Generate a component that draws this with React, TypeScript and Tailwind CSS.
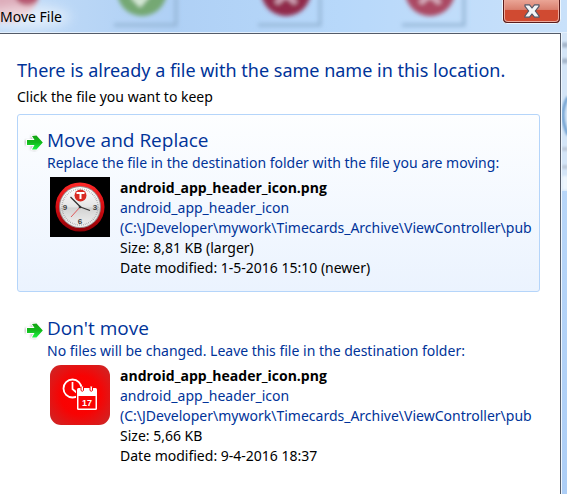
import React from 'react';

interface FileOption {
  id: string;
  title: string;
  description: string;
  name: string;
  folder: string;
  path: string;
  size: string;
  modified: string;
  highlighted: boolean;
  thumbnail: React.ReactNode;
}

const ClockThumbnail = () => (
  <svg viewBox="0 0 60 60" className="block h-[60px] w-[60px] shrink-0" aria-hidden="true">
    <defs>
      <linearGradient id="rim" x1="0" y1="0" x2="0" y2="1">
        <stop offset="0" stopColor="#ff2a2a" />
        <stop offset="0.5" stopColor="#d50d12" />
        <stop offset="1" stopColor="#8f0006" />
      </linearGradient>
      <linearGradient id="face" x1="0" y1="0" x2="0" y2="1">
        <stop offset="0" stopColor="#ffffff" />
        <stop offset="0.5" stopColor="#e4e4e4" />
        <stop offset="0.52" stopColor="#d2d2d2" />
        <stop offset="1" stopColor="#f2f2f2" />
      </linearGradient>
    </defs>
    <rect width="60" height="60" fill="#000" />
    <circle cx="30" cy="30" r="24.5" fill="url(#rim)" />
    <circle cx="30" cy="30" r="21" fill="#9a8f8f" />
    <circle cx="30" cy="30" r="20" fill="url(#face)" />
    <circle cx="30" cy="30" r="18" fill="none" stroke="#888" strokeWidth="1.5" strokeDasharray="0.5 1.385" />
    <circle cx="30.500" cy="18.500" r="6" fill="#d92a22" />
    <path d="M26.500 16h8M30.500 16v6" stroke="#fff" strokeWidth="2" fill="none" />
    <g fontFamily="'Liberation Sans', sans-serif" fontSize="8" fontWeight="bold" fill="#444" textAnchor="middle">
      <text x="15" y="33">9</text>
      <text x="45" y="33">3</text>
      <text x="30" y="47">6</text>
    </g>
    <path d="M31 30.500L20.500 20M29 29.500L40 33.500" stroke="#333" strokeWidth="1.300" fill="none" />
    <path d="M31 29L21 40" stroke="#e0484a" strokeWidth="0.900" fill="none" />
    <circle cx="30" cy="30" r="1.300" fill="#333" />
  </svg>
);

const CalendarThumbnail = () => (
  <svg viewBox="0 0 60 60" className="block h-[60px] w-[60px] shrink-0" aria-hidden="true">
    <defs>
      <radialGradient id="redTile" cx="0.5" cy="0.5" r="0.65">
        <stop offset="0" stopColor="#ff0000" />
        <stop offset="0.5" stopColor="#f80303" />
        <stop offset="1" stopColor="#cf2424" />
      </radialGradient>
    </defs>
    <rect width="60" height="60" rx="11" fill="url(#redTile)" />
    <circle cx="22.500" cy="23.500" r="9" fill="none" stroke="#fff" strokeWidth="1.800" />
    <path d="M22.500 17v7l4 3.500" fill="none" stroke="#fff" strokeWidth="1.700" />
    <path d="M26 22.500h22v23H26z" fill="#f80303" />
    <path d="M27 24.500q0-1.500 1.500-1.500h17q1.500 0 1.500 1.500v19q0 1.500-1.500 1.500h-17q-1.500 0-1.500-1.500z" fill="#fff" />
    <path d="M28.500 31h17v12.500h-17z" fill="#f80303" />
    <path d="M31 21.500v4q1.300 1.500 2.500 0v-4M40 21.500v4q1.300 1.500 2.500 0v-4" fill="#fff" stroke="#f80303" strokeWidth="1" />
    <text x="37" y="40.500" textAnchor="middle" fontFamily="'Liberation Sans', sans-serif" fontSize="9" fontWeight="bold" fill="#fff">17</text>
  </svg>
);

const ArrowIcon = () => (
  <svg viewBox="0 0 20 20" className="mt-[6px] h-5 w-5 shrink-0" aria-hidden="true">
    <defs>
      <linearGradient id="arrowGreen" x1="0" y1="0" x2="0" y2="1">
        <stop offset="0" stopColor="#13a313" />
        <stop offset="0.5" stopColor="#12b91b" />
        <stop offset="1" stopColor="#1cf542" />
      </linearGradient>
      <filter id="arrowShadow" x="-30%" y="-30%" width="160%" height="160%">
        <feGaussianBlur stdDeviation="1.2" />
      </filter>
    </defs>
    <path d="M1 8h6L7 4l4-1 7 8-7 8-5-2 2-4H1z" fill="#777" opacity="0.5" filter="url(#arrowShadow)" />
    <path d="M3 8h7.500L8 4l4.500-.5L18.800 10.500l-6.300 7H8l2.500-4.500H3z" fill="url(#arrowGreen)" stroke="#fff" strokeWidth="2" strokeLinejoin="round" paintOrder="stroke" />
  </svg>
);

const OPTIONS: FileOption[] = [
  {
    id: 'replace',
    title: 'Move and Replace',
    description: 'Replace the file in the destination folder with the file you are moving:',
    name: 'android_app_header_icon.png',
    folder: 'android_app_header_icon',
    path: '(C:\\JDeveloper\\mywork\\Timecards_Archive\\ViewController\\pub',
    size: 'Size: 8,81 KB (larger)',
    modified: 'Date modified: 1-5-2016 15:10 (newer)',
    highlighted: true,
    thumbnail: <ClockThumbnail />
  },
  {
    id: 'keep',
    title: "Don't move",
    description: 'No files will be changed. Leave this file in the destination folder:',
    name: 'android_app_header_icon.png',
    folder: 'android_app_header_icon',
    path: '(C:\\JDeveloper\\mywork\\Timecards_Archive\\ViewController\\pub',
    size: 'Size: 5,66 KB',
    modified: 'Date modified: 9-4-2016 18:37',
    highlighted: false,
    thumbnail: <CalendarThumbnail />
  }
];

const OptionButton: React.FC<{ option: FileOption }> = ({ option }) => (
  <button
    type="button"
    className={`flex w-full items-start rounded-[3px] border pt-[11px] pr-1 pb-[13px] pl-[6px] text-left ${
      option.highlighted
        ? 'border-[#b5d5fa] bg-linear-to-b from-[#fdfeff] to-[#ebf3fe]'
        : 'border-transparent'
    }`}
  >
    <ArrowIcon />
    <span className="block min-w-0 flex-1 pl-[3px]">
      <span className="block font-['Open_Sans',sans-serif] text-[19px] leading-7 text-[#003399]">{option.title}</span>
      <span className="block truncate text-[14px] leading-[18px] text-[#003399]">{option.description}</span>
      <span className="flex gap-[10px] pt-[5px] pl-[3px]">
        {option.thumbnail}
        <span className="block min-w-0 flex-1 pt-px text-[14px] leading-5 text-black">
          <span className="block font-['Open_Sans',sans-serif] font-bold">{option.name}</span>
          <span className="block text-[#003399]">{option.folder}</span>
          <span className="block overflow-hidden whitespace-nowrap text-[#003399]">{option.path}</span>
          <span className="block">{option.size}</span>
          <span className="block">{option.modified}</span>
        </span>
      </span>
    </span>
  </button>
);

// Out-of-focus icons showing through the glass title bar
const GlassBackdrop = () => (
  <svg viewBox="0 0 567 33" preserveAspectRatio="xMinYMin slice" className="absolute inset-0 h-full w-full" aria-hidden="true">
    <defs>
      <filter id="soft" x="-30%" y="-30%" width="160%" height="160%">
        <feGaussianBlur stdDeviation="2" />
      </filter>
      <filter id="haze" x="-50%" y="-50%" width="200%" height="200%">
        <feGaussianBlur stdDeviation="6" />
      </filter>
      <linearGradient id="glass" x1="0" y1="0" x2="1" y2="0">
        <stop offset="0" stopColor="#c3dcf7" />
        <stop offset="0.3" stopColor="#afd0f5" />
        <stop offset="0.6" stopColor="#b7d8fa" />
        <stop offset="1" stopColor="#c9e1fa" />
      </linearGradient>
    </defs>
    <rect width="567" height="33" fill="url(#glass)" />
    <g filter="url(#soft)">
      <path d="M-4-4h42v6q-6 10-20 20H-4z" fill="#dba9b7" />
      <circle cx="27" cy="-6" r="12" fill="#b14c66" />
      <circle cx="142" cy="-9" r="25" fill="#74a873" />
      <path d="M133-4l7 7 13-15" fill="none" stroke="#d8ead9" strokeWidth="6" />
      <circle cx="286" cy="-9" r="25" fill="#912c4b" />
      <path d="M276 3l10-8 10 8" fill="none" stroke="#d3a9bd" strokeWidth="5" />
      <circle cx="430" cy="-9" r="25" fill="#ab4863" />
      <path d="M420 3l10-8 10 8" fill="none" stroke="#d9b3c3" strokeWidth="5" />
      <path d="M114 25h62V-4M258 25h62V-4M402 25h62V-4" fill="none" stroke="#94b5d5" strokeWidth="3" />
    </g>
    <ellipse cx="28" cy="17" rx="42" ry="11" fill="#fff" opacity="0.55" filter="url(#haze)" />
  </svg>
);

const CloseButton = () => (
  <button
    type="button"
    aria-label="Close"
    className="mr-[6px] flex h-6 w-[59px] shrink-0 items-center justify-center rounded-b-[5px] border border-t-0 border-[#eef6fd] bg-[#5b1c1c] px-px pb-px"
  >
    <span className="flex h-full w-full items-center justify-center rounded-b-[4px] border border-t-0 border-[#eeaa9d] bg-linear-to-b from-[#eaa596] from-0% via-[#d9806f] via-45% to-[#d04a31] to-50%">
      <svg viewBox="0 0 16 14" className="h-[14px] w-4" aria-hidden="true">
        <path d="M1 .8h4.500L8 4 10.500.8H15v1.500L11.300 7 15 11.800v1.400h-4.500L8 10l-2.500 3.200H1v-1.400L4.700 7 1 2.300z" fill="#f4f5f7" stroke="#535666" strokeWidth="1.200" strokeLinejoin="round" />
      </svg>
    </span>
  </button>
);

export default function App() {
  return (
    <div className="flex min-h-screen flex-col overflow-hidden bg-[#b9d8fa] font-['Noto_Sans','Open_Sans',sans-serif]">
      <header className="relative h-[33px] border-b border-[#e3effc]">
        <GlassBackdrop />
        <div className="relative flex items-start justify-between">
          <h1 className="pt-[7px] text-[14px] leading-5 text-black">Move File</h1>
          <CloseButton />
        </div>
      </header>
      <div className="flex flex-1">
        <main role="dialog" aria-labelledby="heading" className="min-w-0 flex-1 border-t border-r border-[#535b69] bg-white pt-[22px] pr-5 pb-3 pl-[17px]">
          <h2 id="heading" className="text-[18px] leading-7 text-[#003399]">
            There is already a file with the same name in this location.
          </h2>
          <p className="pt-[3px] text-[14px] leading-5 text-black">Click the file you want to keep</p>
          <div className="flex flex-col gap-[10px] pt-[7px]">
            {OPTIONS.map(option => (
              <OptionButton key={option.id} option={option} />
            ))}
          </div>
        </main>
        <div className="w-[6px] shrink-0 border-l border-[#eff7ff] bg-linear-to-b from-[#bddafa] to-[#adcef6]">
          <svg viewBox="0 0 5 158" className="block h-[158px] w-[5px]" aria-hidden="true">
            <defs>
              <filter id="edgeBlur" x="-50%" y="-10%" width="200%" height="120%">
                <feGaussianBlur stdDeviation="1.2" />
              </filter>
            </defs>
            <rect width="5" height="158" fill="#d4e5f7" />
            <g filter="url(#edgeBlur)">
              <path d="M0 12h6M0 28h6" stroke="#a4b5c9" strokeWidth="5" />
              <path d="M6 64q-10 17 0 38" stroke="#6e9fcf" strokeWidth="3" fill="none" />
              <path d="M0 116h6M0 134h6" stroke="#bdc9da" strokeWidth="4" />
              <path d="M0 150h6" stroke="#edf5fd" strokeWidth="14" />
            </g>
          </svg>
        </div>
      </div>
    </div>
  );
}
